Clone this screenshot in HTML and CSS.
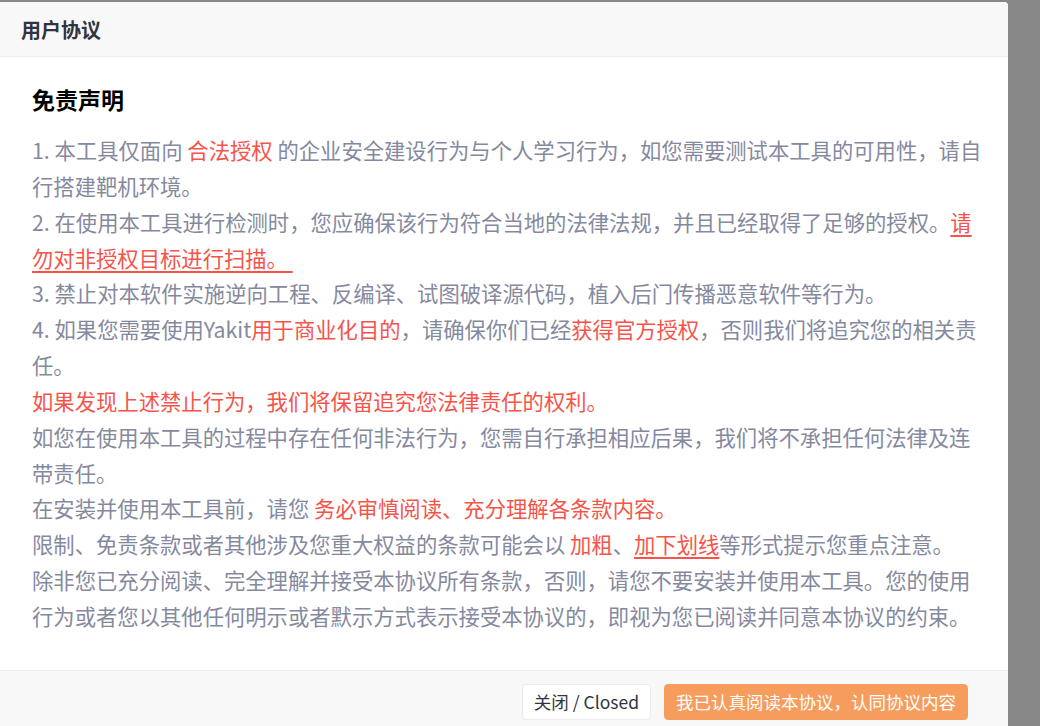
FILE: index.html
```html
<!DOCTYPE html>
<html lang="zh-CN">

<head>
    <meta charset="UTF-8">
    <meta name="viewport" content="width=device-width, initial-scale=1.0">
    <title>用户协议</title>
    <link rel="stylesheet" href="styles.css">
</head>

<body>
    <div class="modal">
        <div class="modal-header">
            <span class="modal-title">用户协议</span>
        </div>

        <div class="modal-body">
            <h2 class="agreement-title">免责声明</h2>
            <p class="agreement-line">1. 本工具仅面向 <span class="danger">合法授权</span> 的企业安全建设行为与个人学习行为，如您需要测试本工具的可用性，请自行搭建靶机环境。</p>
            <p class="agreement-line">2. 在使用本工具进行检测时，您应确保该行为符合当地的法律法规，并且已经取得了足够的授权。<span class="danger underline">请勿对非授权目标进行扫描。&nbsp;</span></p>
            <p class="agreement-line">3. 禁止对本软件实施逆向工程、反编译、试图破译源代码，植入后门传播恶意软件等行为。</p>
            <p class="agreement-line">4. 如果您需要使用Yakit<span class="danger">用于商业化目的</span>，请确保你们已经<span class="danger">获得官方授权</span>，否则我们将追究您的相关责任。</p>
            <p class="agreement-line danger">如果发现上述禁止行为，我们将保留追究您法律责任的权利。</p>
            <p class="agreement-line">如您在使用本工具的过程中存在任何非法行为，您需自行承担相应后果，我们将不承担任何法律及连带责任。</p>
            <p class="agreement-line">在安装并使用本工具前，请您 <span class="danger">务必审慎阅读、充分理解各条款内容。</span></p>
            <p class="agreement-line">限制、免责条款或者其他涉及您重大权益的条款可能会以 <span class="danger">加粗</span>、<span class="danger underline">加下划线</span>等形式提示您重点注意。</p>
            <p class="agreement-line">除非您已充分阅读、完全理解并接受本协议所有条款，否则，请您不要安装并使用本工具。您的使用行为或者您以其他任何明示或者默示方式表示接受本协议的，即视为您已阅读并同意本协议的约束。</p>
        </div>

        <div class="modal-footer">
            <button class="btn btn-outline">关闭 / Closed</button>
            <button class="btn btn-primary">我已认真阅读本协议，认同协议内容</button>
        </div>
    </div>
</body>

</html>
```

FILE: styles.css
```css
html,
body {
    margin: 0;
    height: 100%;
}

body {
    background: #888888;
    font-family: "Noto Sans CJK SC", "Noto Sans", sans-serif;
    overflow: hidden;
}

.modal {
    width: 1018px;
    margin: 2px 0 0 -10px;
    background: #ffffff;
    border-radius: 4px 4px 0 0;
    overflow: hidden;
}

.modal-header {
    height: 54px;
    display: flex;
    align-items: center;
    padding-left: 31px;
    background: #f8f8f8;
    border-bottom: 1px solid #eaecf3;
}

.modal-title {
    font-size: 20px;
    font-weight: 600;
    color: #31343f;
}

.modal-body {
    padding: 24px 24px 36px 42px;
}

.agreement-title {
    margin: 0 0 15px 0;
    font-size: 23px;
    line-height: 36px;
    font-weight: 700;
    color: #000000;
}

.agreement-line {
    margin: 0;
    font-size: 21.33px;
    line-height: 35.85px;
    color: #85899e;
}

.danger {
    color: #f6544a;
}

.underline {
    text-decoration: underline;
    text-decoration-thickness: 2px;
    text-underline-offset: 4px;
}

.modal-footer {
    height: 70px;
    display: flex;
    justify-content: flex-end;
    align-items: flex-start;
    gap: 13px;
    padding: 13px 40px 0 0;
    background: #f8f8f8;
    border-top: 1px solid #eaecf3;
}

.btn {
    height: 36px;
    padding: 0 11px;
    border-radius: 4px;
    font-family: "Noto Sans CJK SC", "Noto Sans", sans-serif;
    font-size: 17.5px;
    cursor: pointer;
}

.btn-outline {
    background: #ffffff;
    border: 1px solid #eaecf3;
    color: #31343f;
}

.btn-primary {
    background: #f69d5e;
    border: 1px solid #f69d5e;
    color: #ffffff;
}
```
